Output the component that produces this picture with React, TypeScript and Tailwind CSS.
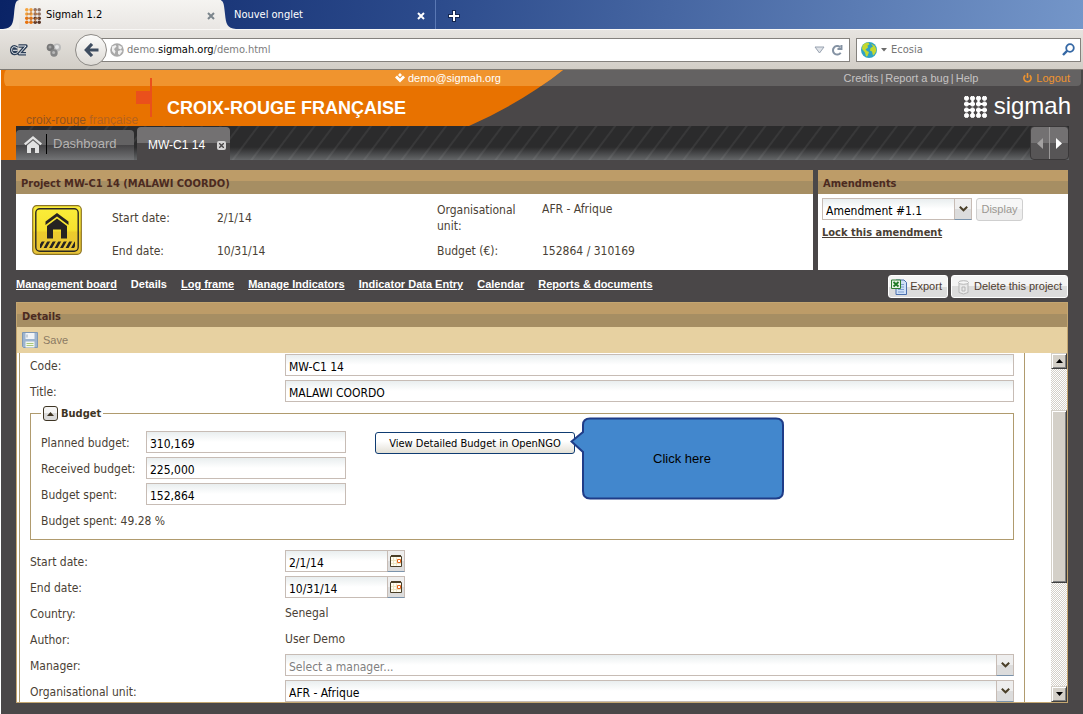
import React, { useId, useState } from "react";

const ui = "font-['DejaVu_Sans_Condensed','Noto_Sans',sans-serif]";
const arial = "font-['Liberation_Sans',Arial,sans-serif]";
const field =
  "h-[22px] w-full min-w-0 appearance-none rounded-none border border-[#c7bcb5] bg-white bg-[linear-gradient(#e9eeef,#ffffff_10px)] pl-[3px] pt-[3px] text-[12px] leading-4 text-black outline-none";
const trigger =
  "flex h-[22px] w-[18px] items-center justify-center border border-[#c7bcb5] border-b-[#7b93ab] bg-[linear-gradient(#eeeeee_50%,#dcdcdc_50%)]";

function Chevron() {
  return (
    <svg width="9" height="6" viewBox="0 0 9 6" fill="none" stroke="#4a3f28" strokeWidth="2">
      <path d="M0.8 0.8 4.5 4.3 8.2 0.8" />
    </svg>
  );
}

function SelectBox({ id, value, muted, label }: { id?: string; value: string; muted?: boolean; label?: string }) {
  return (
    <div className="relative w-full">
      <select id={id} aria-label={label} className={`${field} ${muted ? "text-[#808080]!" : ""}`} defaultValue={value}>
        <option>{value}</option>
      </select>
      <span className={`pointer-events-none absolute right-0 top-0 ${trigger}`}>
        <Chevron />
      </span>
    </div>
  );
}

function Row({ label, children }: { label: string; children: (id: string) => React.ReactNode }) {
  const id = useId();
  return (
    <div className="grid min-h-[22px] grid-cols-[255px_1fr] items-center">
      <label htmlFor={id} className="pt-0.5">{label}</label>
      {children(id)}
    </div>
  );
}

function DateField({ id, value }: { id: string; value: string }) {
  return (
    <div className="flex w-[120px]">
      <input id={id} type="text" defaultValue={value} className={`${field} border-r-0`} />
      <button type="button" aria-label="Choose a date" className={`${trigger} shrink-0`}>
        <svg className="shrink-0" width="12" height="12" viewBox="0 0 12 12">
          <path d="M.5 1.500h11v10H.5z" fill="#fffdf2" stroke="#4a3f28" />
          <path d="M1 0h10v2H1z" fill="#4a3f28" />
          <path d="M3.500 2.500v8M6.500 2.500v8M1 5.500h10M1 8.500h10" stroke="#ece5c4" />
          <path d="M7.500 4.500h3v3h-3z" fill="#fff" stroke="#e8651a" />
        </svg>
      </button>
    </div>
  );
}

function BudgetField({ label, value }: { label: string; value: string }) {
  const id = useId();
  return (
    <div className="grid grid-cols-[105px_200px] items-center">
      <label htmlFor={id} className="whitespace-nowrap pt-0.5">{label}</label>
      <input id={id} type="text" defaultValue={value} className={field} />
    </div>
  );
}

function PanelHeader({ title }: { title: string }) {
  return (
    <h2 className="flex h-6 items-center bg-[linear-gradient(#bd9c68_46%,#a68e63_46%)] px-[5px] pt-1 text-[11px] font-bold text-[#4c2a1f]">
      {title}
    </h2>
  );
}

function BrowserTabs() {
  return (
    <div className="flex h-[29px] items-stretch bg-[linear-gradient(100deg,#0a2366,#2c4b8c_40%,#7496c9)] pl-[3px] text-[11px]">
      <svg className="h-full w-4 shrink-0" viewBox="0 0 16 29" preserveAspectRatio="none" fill="#efedea">
        <path d="M0 29C9 28 10 24 11 14 12 5 12 1 16 0V29Z" />
      </svg>
      <div className="flex w-[202px] items-center bg-linear-to-b from-[#f5f4f1] to-[#e9e6e3] px-1.5 pt-0.5 text-black">
        <svg width="16" height="16" viewBox="0 0 16 16">
          {[1.8, 6, 10.2, 14.2].map((y, r) =>
            [1.8, 6, 10.2, 14.2].map((x, c) => (
              <circle
                key={`${x}-${y}`}
                cx={x}
                cy={y}
                r="1.8"
                fill={r < 2 ? (c < 2 ? "#f5a33c" : "#8d6f63") : c < 2 ? "#e8720c" : "#5b3424"}
              />
            )),
          )}
          <path d="M1.800 6H6M10.200 6h4M1.800 10.200H6M10.200 10.200h4M6 1.800V6M10.200 1.800V6M6 10.200v4M10.200 10.200v4" stroke="#c17a3d" />
        </svg>
        <span className="ml-[5px] flex-1">Sigmah 1.2</span>
        <button type="button" aria-label="Close tab">
          <svg width="8" height="8" viewBox="0 0 8 8" stroke="#7b858c" strokeWidth="2">
            <path d="m1 1 6 6M7 1 1 7" />
          </svg>
        </button>
      </div>
      <svg className="-ml-px h-full w-4 shrink-0" viewBox="0 0 16 29" preserveAspectRatio="none" fill="#efedea">
        <path d="M16 29C7 28 6 24 5 14 4 5 4 1 0 0V29Z" />
      </svg>
      <div className="-ml-1 flex w-[204px] items-center border-r border-[#5a78b4] pl-[2px] pr-2.5 pt-0.5 text-white">
        <span className="flex-1">Nouvel onglet</span>
        <button type="button" aria-label="Close tab">
          <svg width="8" height="8" viewBox="0 0 8 8" stroke="#fff" strokeWidth="2">
            <path d="m1 1 6 6M7 1 1 7" />
          </svg>
        </button>
      </div>
      <button type="button" aria-label="New tab" className="ml-3 flex items-center pt-0.5">
        <svg width="12" height="12" viewBox="0 0 12 12" fill="none">
          <path d="M6 0v12M0 6h12" stroke="#14264f" strokeWidth="4" />
          <path d="M6 1v10M1 6h10" stroke="#fff" strokeWidth="2" />
        </svg>
      </button>
    </div>
  );
}

function BrowserToolbar() {
  return (
    <div className="flex h-[41px] items-center border-y border-b-[#7d7a75] border-t-[#f8f7f5] bg-linear-to-b from-[#e7e4e0] to-[#d2cec7] pl-[10px] pr-0.5 text-[11px]">
      <button type="button" aria-label="Zotero" className="flex">
        <svg width="18" height="12" viewBox="0 0 18 12" fill="none" strokeLinejoin="round">
          <path d="M7 4C4 1.500 1.500 3 1.700 6.300S5 10.500 7.500 8.500M3 6.300h4.500M8.500 2H16L9 9.800h7" stroke="#2b3d55" strokeWidth="3.400" />
          <path d="M7 4C4 1.500 1.500 3 1.700 6.300S5 10.500 7.500 8.500M3 6.300h4.500M8.500 2H16L9 9.800h7" stroke="#eef1f4" strokeWidth="1" />
        </svg>
      </button>
      <button type="button" aria-label="Add-on" className="ml-[18px] flex">
        <svg width="16" height="14" viewBox="0 0 16 14">
          <circle cx="11" cy="4.500" r="4" fill="#bcbcbc" />
          <circle cx="4.500" cy="4.500" r="3.800" fill="#777" />
          <circle cx="8" cy="10" r="3.700" fill="#858585" />
          <circle cx="11" cy="4" r="2" fill="#e6e6e6" />
          <circle cx="4" cy="4" r="1.500" fill="#a2a2a2" />
          <circle cx="7.600" cy="9.500" r="1.500" fill="#b8b8b8" />
        </svg>
      </button>
      <button type="button" aria-label="Back" className="z-10 ml-[13px] flex h-8 w-8 shrink-0 items-center justify-center rounded-full border border-[#8d8a86] bg-linear-to-b from-[#fbfbfa] to-[#dedbd6]">
        <svg width="15" height="14" viewBox="0 0 15 14" fill="none" stroke="#3e4d60" strokeWidth="3.200">
          <path d="M14.500 7H3M8 1 2.300 7 8 13" />
        </svg>
      </button>
      <div className="-ml-2 flex h-6 flex-1 items-center border border-[#84817d] bg-white pl-2.5 pr-1">
        <svg width="14" height="14" viewBox="0 0 14 14">
          <circle cx="7" cy="7" r="6.800" fill="#a9a9a9" />
          <path d="M2 3.500 5.500 2l1 1.500L4 6l1.500 2.500L4.500 11 2 8zM8.500 2l3.500 2-1 2.500-2.500-1zM8 8l3-1 1.500 1-3 4-1.500-1z" fill="#f0f0f0" />
        </svg>
        <div
          role="textbox"
          aria-label="Address"
          contentEditable
          suppressContentEditableWarning
          spellCheck={false}
          className="ml-[3px] flex-1 pt-0.5 text-[#7c7c7c] outline-none"
        >
          demo.<span className="text-black">sigmah.org</span>/demo.html
        </div>
        <svg width="11" height="8" viewBox="0 0 11 8" fill="#dfe3e8" stroke="#98a2b0">
          <path d="M1 1h9L5.500 7z" />
        </svg>
        <button type="button" aria-label="Reload" className="ml-1.5 mr-0.5 flex">
          <svg width="12" height="12" viewBox="0 0 13 13" fill="none" stroke="#8492a3" strokeWidth="2.200">
            <path d="M10.500 9.500A4.600 4.600 0 1 1 9.800 3.400" />
            <path d="M11.300 1v4.300H7" />
          </svg>
        </button>
      </div>
      <div className="ml-1.5 flex h-6 w-[225px] items-center border border-[#84817d] bg-white pl-1 pr-[5px]">
        <svg width="16" height="16" viewBox="0 0 16 16">
          <circle cx="8" cy="8" r="8" fill="#2ea3c4" />
          <path d="M1.500 3.500C3 1.500 5 .5 7.500.4l1 2-2 1 .5 2-2.500 2 1.500 1.500 2 1-1.500 4-1.500.5-1-4L1 7zM10 1.500l4 2.500 1.500 4-1.500 3.500-2 2-1-4-2-1 .5-2.500 2.500-1.500z" fill="#c4d82e" />
        </svg>
        <svg className="ml-1" width="6" height="4" viewBox="0 0 6 4" fill="#6b6b6b">
          <path d="M0 0h6L3 3.500z" />
        </svg>
        <input
          type="text"
          aria-label="Search"
          placeholder="Ecosia"
          className="ml-1 min-w-0 flex-1 pt-0.5 outline-none placeholder:text-[#757575]"
        />
        <svg width="13" height="13" viewBox="0 0 13 13" fill="none" stroke="#3568a5">
          <circle cx="8" cy="5" r="3.800" strokeWidth="1.800" />
          <path d="M5.300 7.700 1 12" strokeWidth="2.400" />
        </svg>
      </div>
    </div>
  );
}

function AppHeader() {
  return (
    <header className={`relative ${arial}`}>
      <svg className="absolute left-0 top-0" width="562" height="90" viewBox="0 0 562 90">
        <path d="M0 0H562Q520 33 468 56H15V90H0Z" fill="#e87200" />
        <path d="M5 0H562Q551 9 540 16H5Q3 14 3 8T5 0Z" fill="#f0942e" />
        <path d="M135 21h14V8h2v39h-2V34h-14z" fill="#ea501c" />
      </svg>
      <div className="mr-0.5 flex h-4 items-center rounded-br bg-[#646262] pr-[11px] text-[11px] text-[#c6c3c2]">
        <div className="relative flex w-[500px] items-center justify-end gap-[3px] text-white">
          <svg width="10" height="10" viewBox="0 0 10 10" fill="#fff">
            <path d="M5 0 7 2 5 4 3 2zM2 2.500 5 5.500 8 2.500 10 4.500 5 9.500 0 4.500z" />
          </svg>
          demo@sigmah.org
        </div>
        <nav className="ml-auto flex gap-0.5">
          <a href="#credits">Credits</a>|<a href="#bug">Report a bug</a>|<a href="#help">Help</a>
        </nav>
        <a href="#logout" className="ml-[45px] flex items-center gap-1 text-[#f0942e]">
          <svg width="9" height="10" viewBox="0 0 9 10" fill="none" stroke="#f0942e" strokeWidth="1.600">
            <path d="M2.300 2.300a3.600 3.600 0 1 0 4.400 0M4.500 0v5" />
          </svg>
          Logout
        </a>
      </div>
      <div className="relative flex h-10 items-start justify-between overflow-hidden pl-[25px] pr-[12px]">
        <div className="flex items-start">
          <span className="mt-[27px] w-[141px] whitespace-nowrap text-[12px] leading-[14px] text-[#b4621f]">
            <span className="text-[#94541f]">croix-rouge</span> française
          </span>
          <h1 className="mt-2 text-[18px] font-bold leading-7 text-white">CROIX-ROUGE FRANÇAISE</h1>
        </div>
        <div className="flex items-start gap-[7px]">
          <svg className="mt-2.5" width="23" height="22" viewBox="0 0 23 22" fill="#fff" stroke="#fff">
            {[2.5, 8.5, 14.5, 20.5].map((x) =>
              [2.3, 8, 14, 19.5].map((y) => <circle key={`${x}-${y}`} cx={x} cy={y} r="2.1" />),
            )}
            <path d="M2.500 8h6M14.500 8h6M2.500 14h6M14.500 14h6M8.500 2v6M14.500 2v6M8.500 14v6M14.500 14v6" strokeWidth="2" />
          </svg>
          <span className="mt-1.5 text-[24px] leading-7 text-white">sigmah</span>
        </div>
      </div>
      <div className="relative ml-[15px] mr-3.5 flex h-[34px] items-end bg-[repeating-linear-gradient(127deg,transparent_0_12px,#ffffff10_13px_14px,transparent_15px),linear-gradient(#2b2b2c_62%,#646668)]">
        <button type="button" className="mr-[3px] flex h-[30px] w-[118px] items-center rounded-t-[4px] bg-[linear-gradient(#636263_50%,#444345_50%,#727375)] pb-0.5 pl-2 text-[13px] text-[#b5b3b2]">
          <svg width="18" height="17" viewBox="0 0 18 17" fill="#e2e2e2">
            <path d="M9 0 18 7.500l-1.500 1.700L9 3 1.500 9.200 0 7.500z" />
            <path d="M9 4.500 15 9.500V17h-4v-5H7v5H3V9.500z" />
          </svg>
          <span className="ml-1 mr-1.5 h-5 w-px bg-black" />
          Dashboard
        </button>
        <div className="flex h-[33px] w-[93px] items-center rounded-t-[4px] bg-[linear-gradient(#737172_50%,#4a4748_50%)] pl-[11px] pr-1 pt-[3px] text-[12px] text-white">
          <span className="flex-1">MW-C1 14</span>
          <button type="button" aria-label="Close MW-C1 14" className="flex h-[9px] w-[9px] items-center justify-center rounded-[2px] bg-[#d5d3d3]">
            <svg width="5" height="5" viewBox="0 0 5 5" stroke="#4a4748" strokeWidth="1.400">
              <path d="m0 0 5 5M5 0 0 5" />
            </svg>
          </button>
        </div>
        <div className="ml-auto flex h-[34px] overflow-hidden rounded-[4px] border border-[#3a3839] bg-[linear-gradient(#737172_50%,#575556_50%)]">
          <button type="button" aria-label="Previous tabs" className="flex w-[19px] items-center justify-center border-r border-[#9a9898]">
            <svg width="6" height="11" viewBox="0 0 6 11" fill="#a3a1a1"><path d="M6 0v11L0 5.500z" /></svg>
          </button>
          <button type="button" aria-label="Next tabs" className="flex w-[18px] items-center justify-center">
            <svg width="6" height="11" viewBox="0 0 6 11" fill="#fff"><path d="M0 0v11l6-5.500z" /></svg>
          </button>
        </div>
      </div>
    </header>
  );
}

function ShelterIcon() {
  return (
    <svg width="50" height="50" viewBox="0 0 50 50">
      <defs>
        <linearGradient id="sign" x1="0" y1="0" x2="0" y2="1">
          <stop offset="0" stopColor="#fbee3a" />
          <stop offset=".5" stopColor="#f6e22f" />
          <stop offset=".55" stopColor="#edcc2c" />
          <stop offset="1" stopColor="#e8c43a" />
        </linearGradient>
        <clipPath id="hatch"><path d="M8 36.500h35v6.500H8z" /></clipPath>
      </defs>
      <rect x=".7" y=".7" width="48.600" height="48.600" rx="4" fill="url(#sign)" stroke="#8c7426" strokeWidth="1.200" />
      <rect x="3.800" y="3.800" width="42.400" height="42.400" rx="4" fill="none" stroke="#2b2823" strokeWidth="1.400" />
      <path d="M25 8 36.500 16.500V20L25 11.500 13.500 20V16.500z" fill="#262322" />
      <path d="M25 13.500 35 21V33.500h-6V24.500h-8v9H15V21z" fill="#262322" />
      <g clipPath="url(#hatch)" stroke="#262322" strokeWidth="2.600">
        <path d="M7 44l5-9M12.500 44l5-9M18 44l5-9M23.500 44l5-9M29 44l5-9M34.500 44l5-9M40 44l5-9" />
      </g>
    </svg>
  );
}

function ProjectSummary() {
  return (
    <div className="flex gap-[5px]">
      <section className="flex-1 bg-white">
        <PanelHeader title="Project MW-C1 14 (MALAWI COORDO)" />
        <div className="flex h-[76px] pl-4">
          <div className="mt-[11px] w-20 shrink-0">
            <ShelterIcon />
          </div>
          <dl className="mt-[7px] grid grid-cols-[105px_220px_105px_1fr] grid-rows-[34px_32px] items-center leading-4">
            <dt>Start date:</dt>
            <dd>2/1/14</dd>
            <dt>
              Organisational
              <br />
              unit:
            </dt>
            <dd className="self-start">AFR - Afrique</dd>
            <dt>End date:</dt>
            <dd>10/31/14</dd>
            <dt>Budget (€):</dt>
            <dd>152864 / 310169</dd>
          </dl>
        </div>
      </section>
      <section className="w-[250px] bg-white">
        <PanelHeader title="Amendments" />
        <div className="px-1 pt-1">
          <div className="flex gap-1">
            <div className="w-[150px]">
              <SelectBox value="Amendment #1.1" label="Amendment" />
            </div>
            <button
              type="button"
              disabled
              className={`h-[23px] w-[47px] rounded-[3px] border border-[#cfcfcf] bg-[linear-gradient(#f7f7f7_50%,#ededed_50%)] text-[11px] text-[#9b9792] ${arial}`}
            >
              Display
            </button>
          </div>
          <a href="#lock" className="mt-1 inline-block text-[11px] font-bold leading-4 underline">
            Lock this amendment
          </a>
        </div>
      </section>
    </div>
  );
}

const tabs = [
  "Management board",
  "Details",
  "Log frame",
  "Manage Indicators",
  "Indicator Data Entry",
  "Calendar",
  "Reports & documents",
];

const actionButton =
  "flex h-[23px] items-center gap-[3px] rounded-[3px] border border-white bg-[linear-gradient(#f4f4f4_50%,#dcdcdc_50%)] pr-[5px] text-[11px] text-[#4f3d30]";

function ProjectNav() {
  return (
    <div className={`flex h-8 items-start justify-between ${arial}`}>
      <nav className="mt-1.5 flex gap-3.5 text-[11px] font-bold leading-4 text-white">
        {tabs.map((t) => (
          <a key={t} href="#tab" className={t === "Details" ? "" : "underline"}>
            {t}
          </a>
        ))}
      </nav>
      <div className="mt-[5px] flex gap-[3px]">
        <button type="button" className={`${actionButton} pl-0.5`}>
          <svg width="16" height="16" viewBox="0 0 16 16">
            <path d="M5 1h8l2.500 2.500V15.500H5z" fill="#cfe0f7" stroke="#4a6fae" />
            <path d="M7 5.500h6M7 8h6M7 10.500h6M7 13h6" stroke="#7f9fd0" />
            <path d="M.5 1h9v8.500h-9z" fill="#e9f5e6" stroke="#2f7d32" />
            <path d="m2.500 3 5 4.500M7.500 3l-5 4.500" stroke="#1f7a26" strokeWidth="1.800" />
          </svg>
          Export
        </button>
        <button type="button" className={`${actionButton} pl-1`}>
          <svg width="15" height="16" viewBox="0 0 15 16" fill="#e9e9e9" stroke="#b5b5b5">
            <path d="M3 4h9v9.500q-4.500 3-9 0z" />
            <ellipse cx="7.500" cy="3.500" rx="5" ry="1.800" fill="#f6f6f6" />
            <path d="M6 8h3v4H6z" fill="none" />
          </svg>
          Delete this project
        </button>
      </div>
    </div>
  );
}

function Callout() {
  return (
    <div className="absolute -top-[15px] left-[195px] h-[83px] w-[214px] font-['Liberation_Sans',Arial,sans-serif] text-[13px] text-black">
      <svg className="absolute inset-0" width="214" height="83" viewBox="0 0 214 83">
        <path
          d="M13 8Q13 1.500 20 1.500H206Q213 1.500 213 8V74Q213 81.500 206 81.500H20Q13 81.500 13 74V35L1.500 24.500 13 15Z"
          fill="#4287cd"
          stroke="#1f3c88"
          strokeWidth="2"
        />
      </svg>
      <span className="relative flex h-full items-center justify-center pl-2.5">Click here</span>
    </div>
  );
}

function BudgetGroup() {
  const [open, setOpen] = useState(true);
  return (
    <fieldset className="mb-1.5 min-w-0 border border-[#b09b6e] px-2.5 pb-2">
      <legend className="flex h-[15px] items-center gap-[3px] px-0.5 text-[11px] font-bold text-[#3e3524]">
        <button
          type="button"
          aria-label="Collapse budget"
          onClick={() => setOpen(!open)}
          className="flex h-[15px] w-[15px] items-center justify-center rounded-[3px] border border-[#3e3524] bg-[linear-gradient(#f5f5f5_50%,#dadada_50%)]"
        >
          <svg width="7" height="4" viewBox="0 0 7 4" fill="#3e3524"><path d="M3.500 0 7 4H0z" /></svg>
        </button>
        <span className="pt-0.5">Budget</span>
      </legend>
      {open && (
        <div className="flex gap-[29px] pt-2.5">
          <div className="flex flex-col gap-1">
            <BudgetField label="Planned budget:" value="310,169" />
            <BudgetField label="Received budget:" value="225,000" />
            <BudgetField label="Budget spent:" value="152,864" />
            <p className="flex h-[22px] items-center pt-0.5">Budget spent: 49.28 %</p>
          </div>
          <div className="relative mt-px h-[22px] w-[200px]">
            <button
              type="button"
              className="h-[22px] w-full rounded-[3px] border border-[#0f3c72] bg-linear-to-b from-white from-40% to-[#e3e0d6] pt-0.5 text-[11px] text-black"
            >
              View Detailed Budget in OpenNGO
            </button>
            <Callout />
          </div>
        </div>
      )}
    </fieldset>
  );
}

const bevel = "border border-b-[#404040] border-l-[#d4d0c8] border-r-[#404040] border-t-[#d4d0c8] bg-[#d4d0c8] shadow-[inset_1px_1px_#ffffff,inset_-1px_-1px_#808080]";

function ScrollBar() {
  return (
    <div aria-hidden className="flex w-4 flex-col bg-[repeating-conic-gradient(#d4d0c8_0_25%,#ffffff_0_50%)] bg-size-[2px_2px]">
      <span className={`flex h-4 items-center justify-center ${bevel}`}>
        <svg width="7" height="4" viewBox="0 0 7 4" fill="#000"><path d="M3.500 0 7 4H0z" /></svg>
      </span>
      <span className="grow-[41]" />
      <span className={`grow-[172] ${bevel}`} />
      <span className="grow-[104]" />
      <span className={`flex h-4 items-center justify-center ${bevel}`}>
        <svg width="7" height="4" viewBox="0 0 7 4" fill="#000"><path d="M0 0h7L3.500 4z" /></svg>
      </span>
    </div>
  );
}

function DetailsPanel() {
  return (
    <section className="border border-[#c4a671] bg-white">
      <PanelHeader title="Details" />
      <div className="flex h-[26px] items-center bg-[#e7d1a1] pl-[5px]">
        <button type="button" disabled className={`flex items-center gap-[5px] text-[11px] text-[#8b7a63] ${arial}`}>
          <svg width="16" height="16" viewBox="0 0 16 16">
            <path d="M.5.500h15v15H1.500l-1-1z" fill="#9db4cf" stroke="#7f98b5" />
            <path d="M3.500 1h9v6h-9z" fill="#f1f4f7" />
            <path d="M5 2.500v3" stroke="#9aa9b8" />
            <path d="M3.500 9.500h9v6h-9z" fill="#f4f7ee" />
            <path d="M4.500 11.500h7M4.500 13.500h7" stroke="#a9c77a" />
          </svg>
          Save
        </button>
      </div>
      <div className="flex justify-between pl-0.5">
        <form className="mr-[26px] flex flex-1 flex-col gap-1 border-x border-[#b09b6e] px-2.5 pt-px">
          <Row label="Code:">{(id) => <input id={id} type="text" defaultValue="MW-C1 14" className={field} />}</Row>
          <Row label="Title:">{(id) => <input id={id} type="text" defaultValue="MALAWI COORDO" className={field} />}</Row>
          <BudgetGroup />
          <Row label="Start date:">{(id) => <DateField id={id} value="2/1/14" />}</Row>
          <Row label="End date:">{(id) => <DateField id={id} value="10/31/14" />}</Row>
          <Row label="Country:">{(id) => <output id={id}>Senegal</output>}</Row>
          <Row label="Author:">{(id) => <output id={id}>User Demo</output>}</Row>
          <Row label="Manager:">{(id) => <SelectBox id={id} value="Select a manager..." muted />}</Row>
          <Row label="Organisational unit:">{(id) => <SelectBox id={id} value="AFR - Afrique" />}</Row>
        </form>
        <ScrollBar />
      </div>
    </section>
  );
}

export default function App() {
  return (
    <div className={`min-h-screen bg-[#4a4748] text-[12px] text-[#4a3f35] ${ui}`}>
      <BrowserTabs />
      <BrowserToolbar />
      <div className="border-l border-white">
        <AppHeader />
        <main className="px-[15px] pb-[11px] pt-2.5">
          <ProjectSummary />
          <ProjectNav />
          <DetailsPanel />
        </main>
      </div>
    </div>
  );
}
